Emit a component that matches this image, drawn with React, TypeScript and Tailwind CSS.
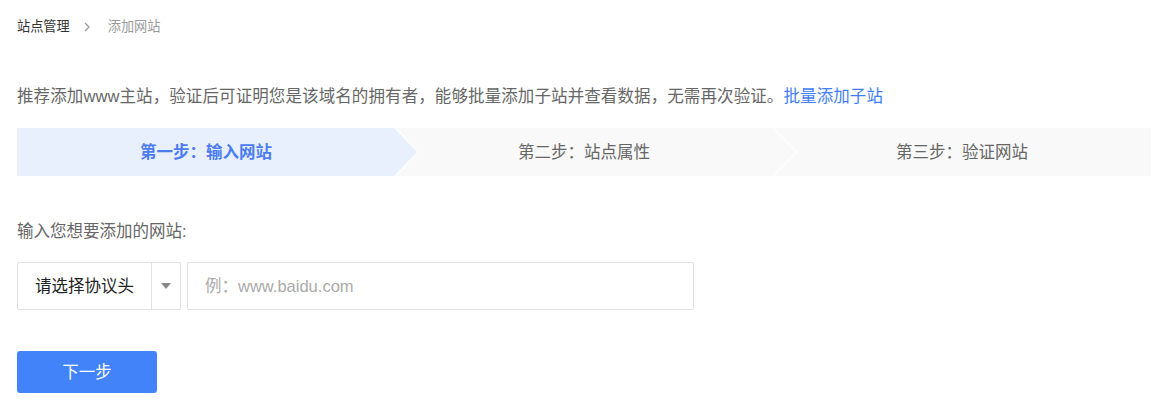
export default function App() {
  const steps = ["第一步：输入网站", "第二步：站点属性", "第三步：验证网站"];

  return (
    <main
      className="min-h-screen bg-white px-[17px]"
      style={{ fontFamily: '"Liberation Sans", "Noto Sans CJK SC", sans-serif' }}
    >
      {/* Breadcrumb */}
      <div className="flex items-center pt-[17px] h-[37px] text-[13.2px] leading-5">
        <span className="text-[#333]">站点管理</span>
        <svg width="18" height="20" viewBox="0 0 18 20" className="ml-[8px] mr-[12px]">
          <polyline points="7,6 11,10 7,14" fill="none" stroke="#999" strokeWidth="1.3" />
        </svg>
        <span className="text-[#999]">添加网站</span>
      </div>

      {/* Intro */}
      <p className="mt-[47px] text-[16.5px] leading-6 tracking-[0.1px] text-[#666]">
        推荐添加www主站，验证后可证明您是该域名的拥有者，能够批量添加子站并查看数据，无需再次验证。
        <a href="#" className="text-[#3f7ef7]">批量添加子站</a>
      </p>

      {/* Steps */}
      <div className="mt-[20px] flex h-12 w-[1134px] bg-[#f9f9f9] text-[16.5px]">
        {steps.map((s, i) => (
          <div
            key={s}
            className={
              i === 0
                ? "relative flex flex-1 items-center justify-center bg-[#e9f0fd] font-bold text-[#4b7cf3]"
                : "relative flex flex-1 items-center justify-center text-[#666]"
            }
          >
            {s}
            {i === 0 && (
              <svg width="26" height="48" viewBox="0 0 26 48" className="absolute left-full top-0 z-10">
                <polygon points="0,0 23,24 0,48" fill="#e9f0fd" />
                <polyline points="0,0 23.5,24 0,48" fill="none" stroke="#fff" strokeWidth="1.2" />
              </svg>
            )}
            {i === 1 && (
              <svg width="26" height="48" viewBox="0 0 26 48" className="absolute left-full top-0 z-10">
                <polyline points="0,0 23.5,24 0,48" fill="none" stroke="#fff" strokeWidth="1.4" />
              </svg>
            )}
          </div>
        ))}
      </div>

      {/* Label */}
      <div className="mt-[43px] text-[16.5px] leading-6 text-[#666]">输入您想要添加的网站:</div>

      {/* Inputs */}
      <div className="mt-[19px] flex gap-[6px]">
        <div className="flex h-12 w-[164px] rounded-[2px] border border-[#e1e1e1] text-[16.5px] text-[#222]">
          <div className="flex flex-1 items-center pl-[17px] border-r border-[#e1e1e1]">请选择协议头</div>
          <div className="flex w-[28px] items-center justify-center">
            <svg width="10" height="6" viewBox="0 0 10 6">
              <polygon points="0,0 10,0 5,6" fill="#888" />
            </svg>
          </div>
        </div>
        <div className="flex h-12 w-[507px] items-center rounded-[2px] border border-[#e1e1e1] pl-[17px] text-[16.5px] text-[#aaa]">
          例：www.baidu.com
        </div>
      </div>

      {/* Button */}
      <button className="mt-[41px] flex h-[42px] w-[140px] items-center justify-center rounded-[3px] bg-[#4283fa] text-[16.5px] text-white">
        下一步
      </button>
    </main>
  );
}
